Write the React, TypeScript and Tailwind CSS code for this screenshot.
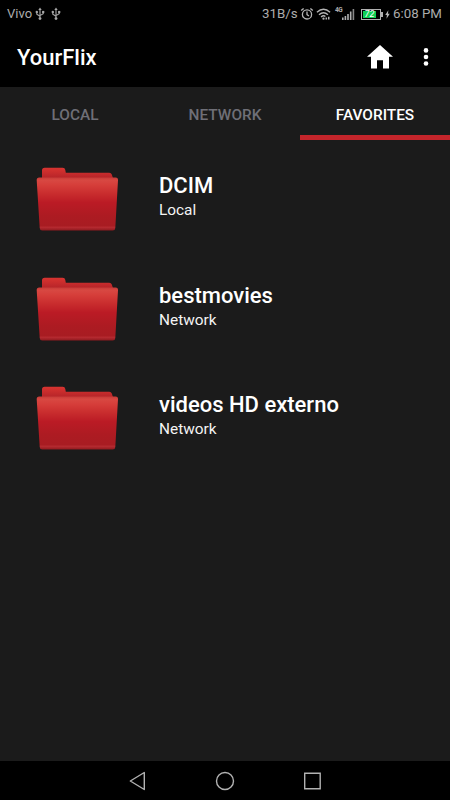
import React from "react";

const items = [
  { name: "DCIM", source: "Local" },
  { name: "bestmovies", source: "Network" },
  { name: "videos HD externo", source: "Network" },
];

function Usb({ className = "" }: { className?: string }) {
  return (
    <svg className={className} width="10" height="14" viewBox="0 0 10 14" fill="none" stroke="#a8a8a8" strokeWidth="1.1">
      <path d="M5 2v9M1.8 5v2.2L5 9.3M8.2 4.5v2.2L5 8.6" />
      <path d="M3.3 3L5 .6 6.7 3z" fill="#a8a8a8" stroke="none" />
      <circle cx="5" cy="11.6" r="1.4" fill="#a8a8a8" stroke="none" />
      <circle cx="1.8" cy="5" r="1.2" fill="#a8a8a8" stroke="none" />
      <path d="M7.1 3.9h2.2v2.2H7.1z" fill="#a8a8a8" stroke="none" />
    </svg>
  );
}

function Alarm() {
  return (
    <svg width="14" height="14" viewBox="0 0 14 14" fill="none" stroke="#b4b4b4" strokeWidth="1.3">
      <circle cx="7" cy="7.4" r="4.6" />
      <path d="M7 4.6v3l2 1.4M1.2 3.6l2.4-2.2M12.8 3.6l-2.4-2.2" />
    </svg>
  );
}

function Wifi() {
  return (
    <svg width="15" height="14" viewBox="0 0 16 14" fill="none" stroke="#b4b4b4" strokeWidth="1.5">
      <path d="M1 5.2Q8-1.2 15 5.2" />
      <path d="M3.2 7.8Q8 3.4 12.8 7.8" />
      <path d="M5.4 10.2Q8 8 10 9.6" />
      <circle cx="8" cy="12" r="1.2" fill="#b4b4b4" stroke="none" />
      <path d="M10.2 10.6h1.6v2.2h-1.6zM12.8 9.8h1.6v3h-1.6z" fill="#b4b4b4" stroke="none" />
    </svg>
  );
}

function Signal() {
  return (
    <svg width="13" height="12" viewBox="0 0 13 12" fill="#b0b0b0">
      <path d="M0 9.5h1.6V12H0zM2.6 8h1.6v4H2.6zM5.2 6h1.6v6H5.2zM7.9 3.4h1.6V12H7.9z" />
      <path d="M10.6 1h1.6v11h-1.6z" fill="#888" />
    </svg>
  );
}

function Folder({ id }: { id: string }) {
  return (
    <svg width="84" height="66" viewBox="36 166 84 66" className="mt-[26px] ml-9 shrink-0">
      <defs>
        <linearGradient id={`${id}-back`} x1="0" y1="0" x2="0" y2="1">
          <stop offset="0" stopColor="#d93430" />
          <stop offset="1" stopColor="#b32328" />
        </linearGradient>
        <linearGradient id={`${id}-front`} x1="0" y1="0" x2="0" y2="1">
          <stop offset="0" stopColor="#c83c38" />
          <stop offset="0.05" stopColor="#d84842" />
          <stop offset="0.14" stopColor="#d63e3a" />
          <stop offset="0.3" stopColor="#c92d2e" />
          <stop offset="0.47" stopColor="#bb1b25" />
          <stop offset="0.72" stopColor="#ad1b22" />
          <stop offset="0.91" stopColor="#a81c22" />
          <stop offset="0.94" stopColor="#b52a30" />
          <stop offset="1" stopColor="#8f191e" />
        </linearGradient>
      </defs>
      <path d="M42 179v-8.6q0-2.6 2.6-2.6h18q2.4 0 2.7 2.2l.5 2.8h43.4q2 0 2.6 1.8l1.5 4.4z" fill={`url(#${id}-back)`} />
      <path d="M39.2 177.6h76.4q2.6 0 2.4 2.6l-2.7 47.8q-.1 2.5-2.6 2.5H42.3q-2.5 0-2.6-2.5l-3-47.8q-.1-2.6 2.5-2.6z" fill={`url(#${id}-front)`} />
    </svg>
  );
}

export default function App() {
  return (
    <div className="flex h-[800px] w-[450px] flex-col overflow-hidden bg-[#1b1b1b] font-['Roboto','Liberation_Sans',sans-serif] text-white">
      <div className="flex h-7 shrink-0 items-center bg-black pr-[9px] pl-[7px] text-[13px] leading-7 text-[#acacac]">
        <span className="w-[28px]">Vivo</span>
        <Usb />
        <Usb className="ml-1.5" />
        <div className="ml-auto flex items-center">
          <span className="w-[38px] text-[13.3px]">31B/s</span>
          <Alarm />
          <span className="ml-[2px]"><Wifi /></span>
          <span className="-mt-[7px] ml-[4px] w-[7px] text-[6.5px] leading-none font-bold tracking-[-0.5px]">4G</span>
          <Signal />
          <div className="ml-[6px] flex h-[11px] w-[20px] items-center border border-[#b0b0b0] p-px">
            <div className="flex h-full w-[13px] items-center justify-center bg-[#10cf55] text-[9px] leading-none text-white italic">72</div>
          </div>
          <div className="h-[5px] w-[2px] bg-[#b0b0b0]" />
          <svg width="5" height="9" viewBox="0 0 6 10" className="ml-[2px]" fill="#b8b8b8">
            <path d="M4 0L.3 5.6h2L1.8 10l3.9-5.8H3.5z" />
          </svg>
          <span className="ml-[3px] w-[48px] text-[13.3px] whitespace-nowrap">6:08 PM</span>
        </div>
      </div>

      <header className="flex h-[59px] shrink-0 items-center bg-black pr-[21px] pl-[17px]">
        <h1 className="mt-px text-[22px] leading-none font-medium">YourFlix</h1>
        <svg width="26" height="24" viewBox="0 0 26 24" className="-mt-px ml-auto" fill="#fff">
          <path d="M13 0L0 11.8h4V23.6h6v-8.4h6v8.4h6V11.8h4z" />
        </svg>
        <svg width="6" height="20" viewBox="0 0 6 20" className="-mt-px ml-[30px]" fill="#fff">
          <circle cx="3" cy="3.4" r="2.3" />
          <circle cx="3" cy="10" r="2.3" />
          <circle cx="3" cy="16.5" r="2.3" />
        </svg>
      </header>

      <nav className="grid h-[53px] shrink-0 grid-cols-3 text-center text-[15.4px] leading-[56px] font-medium text-[#6f6f77]">
        <span className="h-[53px]">LOCAL</span>
        <span className="h-[53px]">NETWORK</span>
        <span className="h-[53px] border-b-[5px] border-[#c4252b] text-white">FAVORITES</span>
      </nav>

      <main className="flex-1">
        {items.map((item, i) => (
          <div key={item.name} className="flex h-[109.5px]">
            <Folder id={`folder-${i}`} />
            <div className="mt-[33px] ml-[39px]">
              <div className="text-[22px] leading-[26px] font-medium">{item.name}</div>
              <div className="text-[15.4px] leading-[22px] text-[#f4f4f4]">{item.source}</div>
            </div>
          </div>
        ))}
      </main>

      <footer className="flex h-[39px] shrink-0 items-center justify-center bg-black">
        <svg width="192" height="20" viewBox="-1 0 192 20" fill="none" stroke="#b2b2b2" strokeWidth="1.4">
          <path d="M14.3 1.5v17L.3 10z" strokeLinejoin="round" />
          <circle cx="95" cy="10" r="8.5" />
          <path d="M174.7 2.2h15.5v15.5h-15.5z" />
        </svg>
      </footer>
    </div>
  );
}
